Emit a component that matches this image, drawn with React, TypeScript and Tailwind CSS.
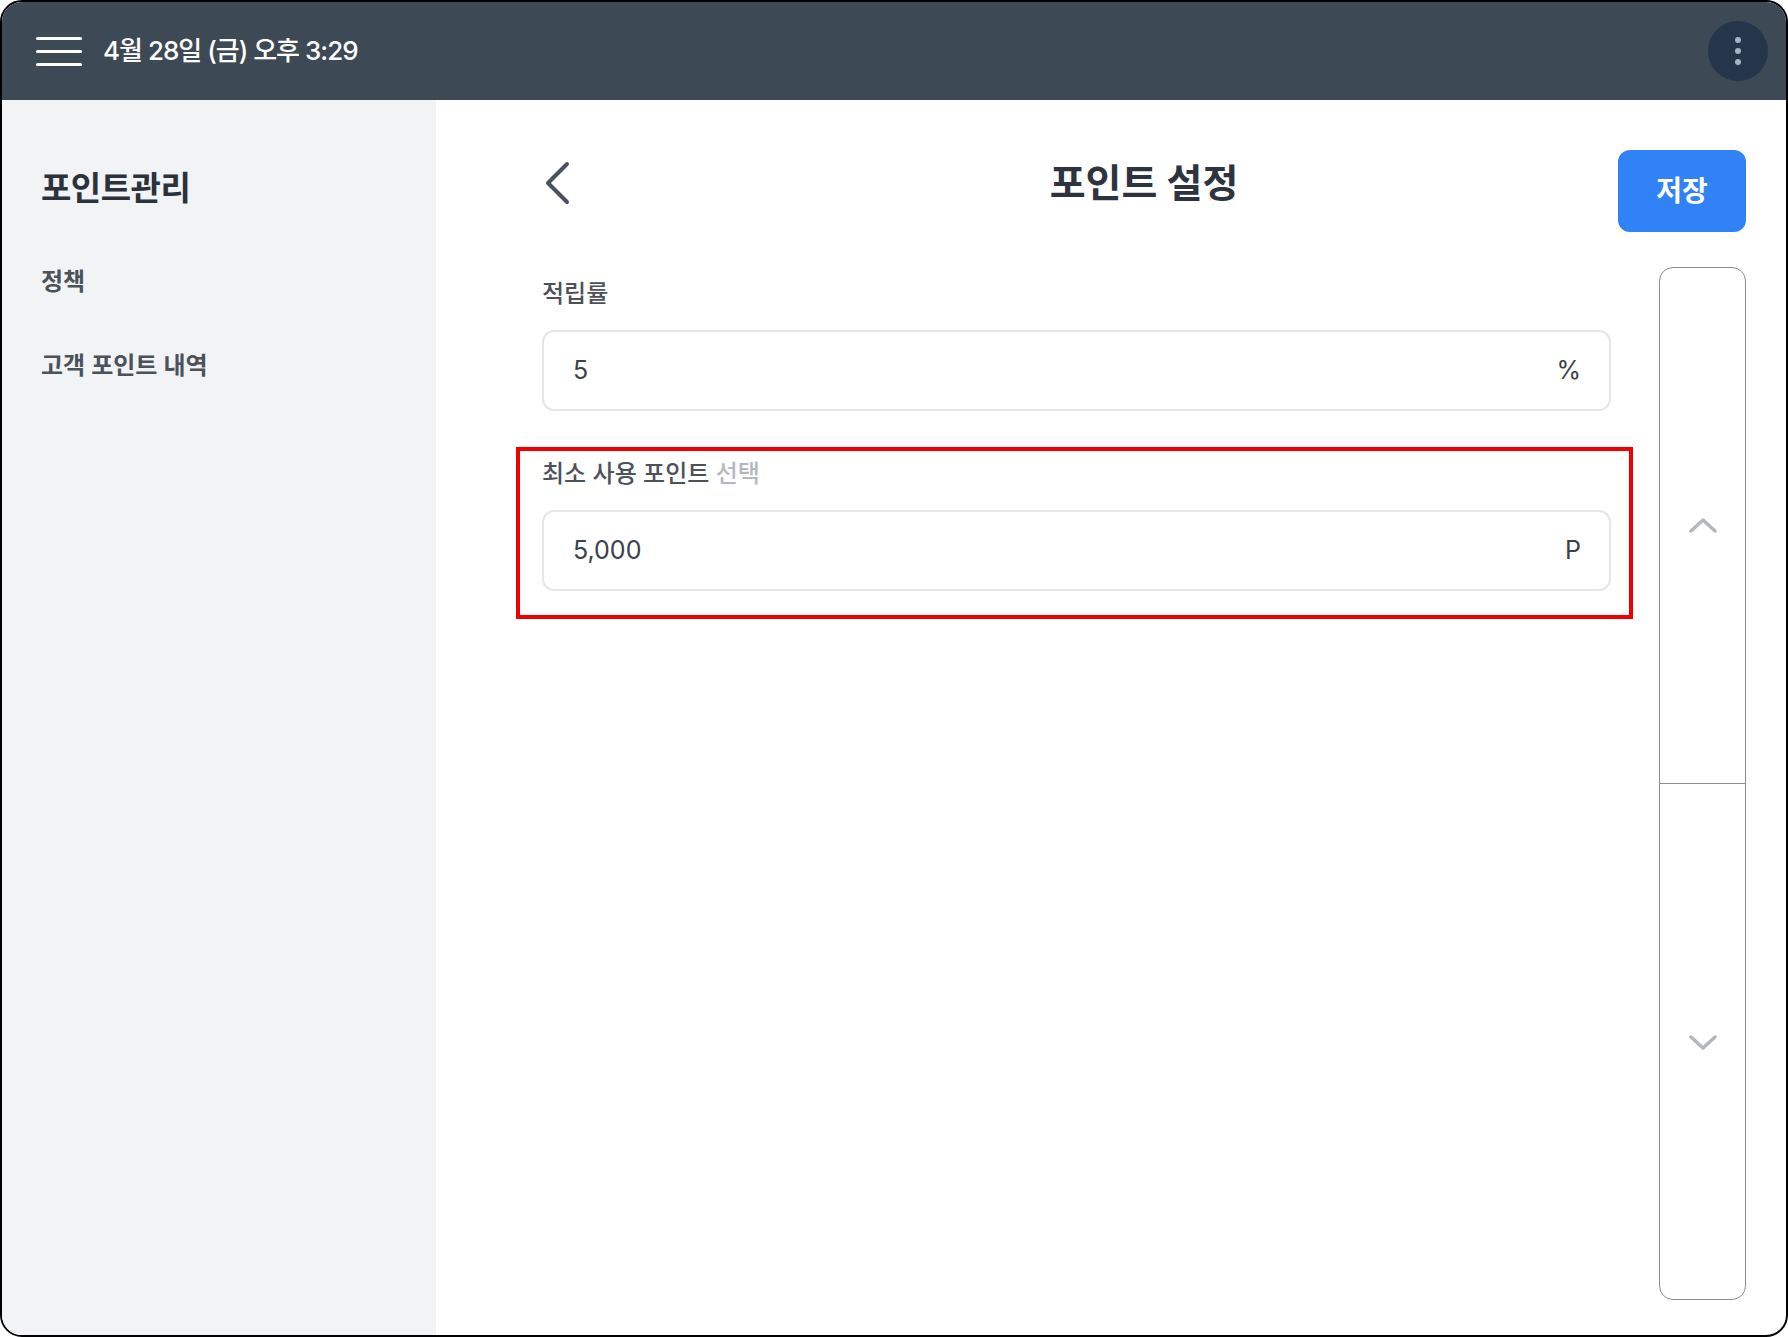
import React from "react";

const FONT = "font-['Inter','Noto_Sans_CJK_KR',sans-serif]";

function Chevron({ dir }: { dir: "up" | "down" }) {
  return (
    <svg width="30" height="16" viewBox="0 0 30 16" fill="none">
      <polyline
        points={dir === "up" ? "3,13 15,2 27,13" : "3,3 15,14 27,3"}
        stroke="#b3b8be"
        strokeWidth="3.5"
        strokeLinecap="round"
        strokeLinejoin="round"
      />
    </svg>
  );
}

export default function App() {
  return (
    <div className={`w-[1788px] h-[1337px] bg-white ${FONT}`}>
      <div className="w-full h-full border-2 border-black rounded-[22px] overflow-hidden flex flex-col">
        {/* Header */}
        <header className="h-[98px] shrink-0 bg-[#3d4954] flex items-center pl-[34px] pr-[18px]">
          <div className="flex flex-col gap-[10px] w-[46px]">
            <span className="block h-[3px] bg-white rounded-full" />
            <span className="block h-[3px] bg-white rounded-full" />
            <span className="block h-[3px] bg-white rounded-full" />
          </div>
          <span className="ml-[21px] text-white text-[26px] font-medium tracking-[-1px] leading-none">
            4월 28일 (금) 오후 3:29
          </span>
          <div className="ml-auto w-[60px] h-[60px] rounded-full bg-[#25364a] flex flex-col items-center justify-center gap-[5px]">
            <span className="block w-[6px] h-[6px] rounded-full bg-[#a7b4c3]" />
            <span className="block w-[6px] h-[6px] rounded-full bg-[#a7b4c3]" />
            <span className="block w-[6px] h-[6px] rounded-full bg-[#a7b4c3]" />
          </div>
        </header>

        <div className="flex flex-1 min-h-0">
          {/* Sidebar */}
          <aside className="w-[434px] shrink-0 bg-[#f2f3f5] pl-[39px] pt-[66px]">
            <div className="text-[33px] font-bold text-[#2b323b] tracking-[-0.5px] leading-[44px]">포인트관리</div>
            <nav className="mt-[56px] flex flex-col gap-[52px]">
              <div className="text-[24px] font-semibold text-[#4b525a] leading-[32px]">정책</div>
              <div className="text-[24px] font-semibold text-[#4b525a] leading-[32px]">고객 포인트 내역</div>
            </nav>
          </aside>

          {/* Main */}
          <main className="flex-1 flex flex-col pl-[106px] pr-[40px] pt-[50px] pb-[35px]">
            <div className="grid grid-cols-[1fr_auto_1fr] items-center h-[82px]">
              <div className="flex items-center">
                <svg width="30" height="46" viewBox="0 0 30 46" fill="none" className="-mt-[16px]">
                  <polyline
                    points="25,4 6,23 25,42"
                    stroke="#4a5260"
                    strokeWidth="4"
                    strokeLinecap="round"
                    strokeLinejoin="round"
                  />
                </svg>
              </div>
              <h1 className="text-[39px] font-bold text-[#2d3440] leading-none -mt-[18px]">포인트 설정</h1>
              <div className="flex justify-end">
                <button className="w-[128px] h-[82px] rounded-[12px] bg-[#3182f6] text-white text-[28px] font-bold">
                  저장
                </button>
              </div>
            </div>

            <div className="flex flex-1 gap-[48px] mt-[35px] min-h-0">
              {/* Form */}
              <div className="flex-1 flex flex-col pt-[11px]">
                <div>
                  <div className="text-[24px] font-medium text-[#4b525a] leading-[32px]">적립률</div>
                  <div className="mt-[20px] h-[81px] rounded-[12px] border-2 border-[#e4e6e9] flex items-center justify-between pl-[29px] pr-[28px]">
                    <span className="text-[25px] text-[#3a4149]">5</span>
                    <span className="text-[25px] text-[#3a4149]">%</span>
                  </div>
                </div>

                <div className="relative mt-[45px]">
                  <div className="text-[24px] font-medium text-[#4b525a] leading-[32px] pt-[2px]">
                    최소 사용 포인트 <span className="text-[#b3b8be]">선택</span>
                  </div>
                  <div className="mt-[20px] h-[81px] rounded-[12px] border-2 border-[#e4e6e9] flex items-center justify-between pl-[29px] pr-[28px]">
                    <span className="text-[25px] text-[#3a4149]">5,000</span>
                    <span className="text-[25px] text-[#3a4149]">P</span>
                  </div>
                  <div className="absolute -top-[9px] -bottom-[28px] -left-[26px] -right-[22px] border-4 border-[#f00000] pointer-events-none" />
                </div>
              </div>

              {/* Scroll control */}
              <div className="w-[87px] shrink-0 border border-[#8e8e8e] rounded-[14px] flex flex-col overflow-hidden">
                <div className="flex-1 flex items-center justify-center border-b border-[#8e8e8e]">
                  <Chevron dir="up" />
                </div>
                <div className="flex-1 flex items-center justify-center">
                  <Chevron dir="down" />
                </div>
              </div>
            </div>
          </main>
        </div>
      </div>
    </div>
  );
}
